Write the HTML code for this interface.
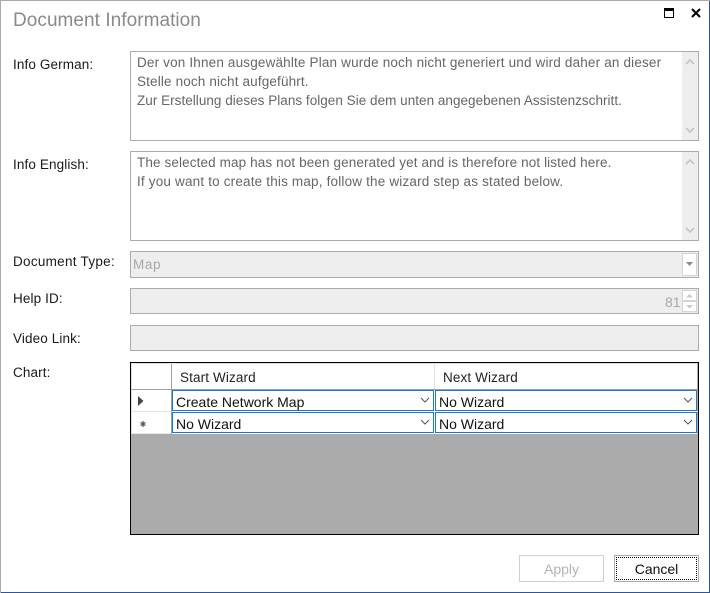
<!DOCTYPE html>
<html><head><meta charset="utf-8">
<style>
html,body{margin:0;padding:0;background:#fff}
#w{position:relative;width:710px;height:593px;overflow:hidden;background:#fff;font-family:"Liberation Sans",sans-serif;font-size:13.5px;color:#1a1a1a}
#w div{position:absolute;box-sizing:border-box;white-space:nowrap}
.t{line-height:18px;height:18px}
.l{letter-spacing:.12px}
.g{color:#666}
.box{border:1px solid #ababab;background:#fff}
.dis{border:1px solid #ababab;background:#eee}
.sb{background:#eee}
.cell{background:#fff;border:1px solid #1979ca;line-height:21px;color:#111;font-size:14px;letter-spacing:0}
</style></head><body>
<div id="w">
<div style="left:0;top:0;width:710px;height:1px;background:#ababab"></div>
<div style="left:0;top:0;width:1px;height:593px;background:#ababab"></div>
<div style="left:709px;top:1px;width:1px;height:592px;background:#2b579a"></div>
<div style="left:1px;top:592px;width:709px;height:1px;background:#2b579a"></div>

<div style="left:13px;top:9px;font-size:19px;line-height:24px;color:#8a8a8a;letter-spacing:.05px">Document Information</div>
<svg style="position:absolute;left:664px;top:8px" width="11" height="11"><rect x=".5" y=".5" width="9" height="9" fill="none" stroke="#000"/><rect x="0" y="0" width="10" height="3" fill="#000"/></svg>
<svg style="position:absolute;left:691px;top:8px" width="11" height="11"><path d="M1 1L9 9M9 1L1 9" stroke="#000" stroke-width="2" fill="none"/></svg>

<div class="t l" style="left:13px;top:56px">Info German:</div>
<div class="t l" style="left:13px;top:156px">Info English:</div>
<div class="t" style="left:13px;top:253px;letter-spacing:.28px">Document Type:</div>
<div class="t l" style="left:13px;top:290px">Help ID:</div>
<div class="t l" style="left:13px;top:330px">Video Link:</div>
<div class="t l" style="left:13px;top:364px">Chart:</div>

<div class="box" style="left:130px;top:51px;width:569px;height:90px"></div>
<div class="sb" style="left:682px;top:52px;width:16px;height:88px"></div>
<svg style="position:absolute;left:684px;top:57px" width="12" height="80"><path d="M2 7L6 3L10 7" stroke="#c4c4c4" stroke-width="1.6" fill="none"/><path d="M2 71L6 75L10 71" stroke="#c4c4c4" stroke-width="1.6" fill="none"/></svg>
<div class="t g" style="left:137px;top:54px;letter-spacing:.17px">Der von Ihnen ausgewählte Plan wurde noch nicht generiert und wird daher an dieser</div>
<div class="t g" style="left:137px;top:73px;letter-spacing:.15px">Stelle noch nicht aufgeführt.</div>
<div class="t g" style="left:137px;top:92px;letter-spacing:.03px">Zur Erstellung dieses Plans folgen Sie dem unten angegebenen Assistenzschritt.</div>

<div class="box" style="left:130px;top:151px;width:569px;height:90px"></div>
<div class="sb" style="left:682px;top:152px;width:16px;height:88px"></div>
<svg style="position:absolute;left:684px;top:157px" width="12" height="80"><path d="M2 7L6 3L10 7" stroke="#c4c4c4" stroke-width="1.6" fill="none"/><path d="M2 71L6 75L10 71" stroke="#c4c4c4" stroke-width="1.6" fill="none"/></svg>
<div class="t g" style="left:137px;top:154px;letter-spacing:.12px">The selected map has not been generated yet and is therefore not listed here.</div>
<div class="t g" style="left:137px;top:173px;letter-spacing:.18px">If you want to create this map, follow the wizard step as stated below.</div>

<div class="dis" style="left:130px;top:251px;width:569px;height:27px"></div>
<div class="t" style="left:133px;top:256px;color:#a8a8a8;letter-spacing:.6px">Map</div>
<div style="left:682px;top:253px;width:15px;height:23px;background:#fff;border:1px solid #d4d4d4"></div>
<svg style="position:absolute;left:686px;top:262px" width="8" height="5"><path d="M0 0H7L3.500 4Z" fill="#8a8a8a"/></svg>

<div class="dis" style="left:130px;top:288px;width:569px;height:26px"></div>
<div class="t" style="left:665px;top:293px;color:#a8a8a8;font-size:14px">81</div>
<div style="left:682px;top:290px;width:15px;height:11px;background:#fff;border:1px solid #d4d4d4"></div>
<div style="left:682px;top:301px;width:15px;height:11px;background:#fff;border:1px solid #d4d4d4"></div>
<svg style="position:absolute;left:686px;top:294px" width="8" height="16"><path d="M0 3.500H7L3.500 0Z" fill="#c8c8c8"/><path d="M0 11H7L3.500 14.500Z" fill="#c8c8c8"/></svg>

<div class="dis" style="left:130px;top:325px;width:569px;height:26px"></div>

<div style="left:130px;top:362px;width:569px;height:173px;background:#ababab;border:1px solid #000"></div>
<div style="left:131px;top:363px;width:566px;height:26px;background:#fff;border-left:1px solid #e2e2e2;border-top:1px solid #e2e2e2"></div>
<div style="left:171px;top:364px;width:1px;height:25px;background:#a0a0a0"></div>
<div style="left:434px;top:364px;width:1px;height:25px;background:#e2e2e2"></div>
<div style="left:132px;top:389px;width:565px;height:1px;background:#a0a0a0"></div>
<div class="t" style="left:180px;top:369px;color:#222;letter-spacing:.12px">Start Wizard</div>
<div class="t" style="left:443px;top:369px;color:#222;letter-spacing:.12px">Next Wizard</div>

<div style="left:131px;top:390px;width:40px;height:44px;background:#fff;border-left:1px solid #e2e2e2"></div>
<div style="left:132px;top:411px;width:39px;height:1px;background:#e2e2e2"></div>
<div style="left:132px;top:433px;width:39px;height:1px;background:#e2e2e2"></div>
<div style="left:171px;top:390px;width:1px;height:44px;background:#a0a0a0"></div>
<svg style="position:absolute;left:137px;top:396px" width="8" height="12"><path d="M1 0L6.500 5L1 10Z" fill="#444"/></svg>
<svg style="position:absolute;left:139px;top:420px" width="8" height="8"><path d="M4 1L4 7M1.500 2.500L6.500 5.500M6.500 2.500L1.500 5.500" stroke="#555" stroke-width="1.300" fill="none"/></svg>

<div style="left:172px;top:390px;width:525px;height:44px;background:#fff"></div>
<div class="cell" style="left:172px;top:390px;width:262px;height:21px;padding-left:3px;padding-top:1px">Create Network Map</div>
<div class="cell" style="left:172px;top:412px;width:262px;height:21px;padding-left:3px;padding-top:1px">No Wizard</div>
<div class="cell" style="left:435px;top:390px;width:262px;height:21px;padding-left:3px;padding-top:1px">No Wizard</div>
<div class="cell" style="left:435px;top:412px;width:262px;height:21px;padding-left:3px;padding-top:1px">No Wizard</div>
<svg style="position:absolute;left:420px;top:397px" width="12" height="8"><path d="M1 1L5 5L9 1" stroke="#555" fill="none"/></svg>
<svg style="position:absolute;left:420px;top:419px" width="12" height="8"><path d="M1 1L5 5L9 1" stroke="#555" fill="none"/></svg>
<svg style="position:absolute;left:683px;top:397px" width="12" height="8"><path d="M1 1L5 5L9 1" stroke="#555" fill="none"/></svg>
<svg style="position:absolute;left:683px;top:419px" width="12" height="8"><path d="M1 1L5 5L9 1" stroke="#555" fill="none"/></svg>

<div style="left:519px;top:555px;width:85px;height:27px;border:1px solid #d0d0d0;background:#fff;text-align:center;line-height:27px;color:#b4b4b4;font-size:14px">Apply</div>
<div style="left:614px;top:555px;width:85px;height:27px;border:1px solid #ababab;background:#fff"></div>
<div style="left:616px;top:557px;width:81px;height:23px;border:1px dotted #000;text-align:center;line-height:23px;color:#111;font-size:14px">Cancel</div>
</div>
</body></html>
